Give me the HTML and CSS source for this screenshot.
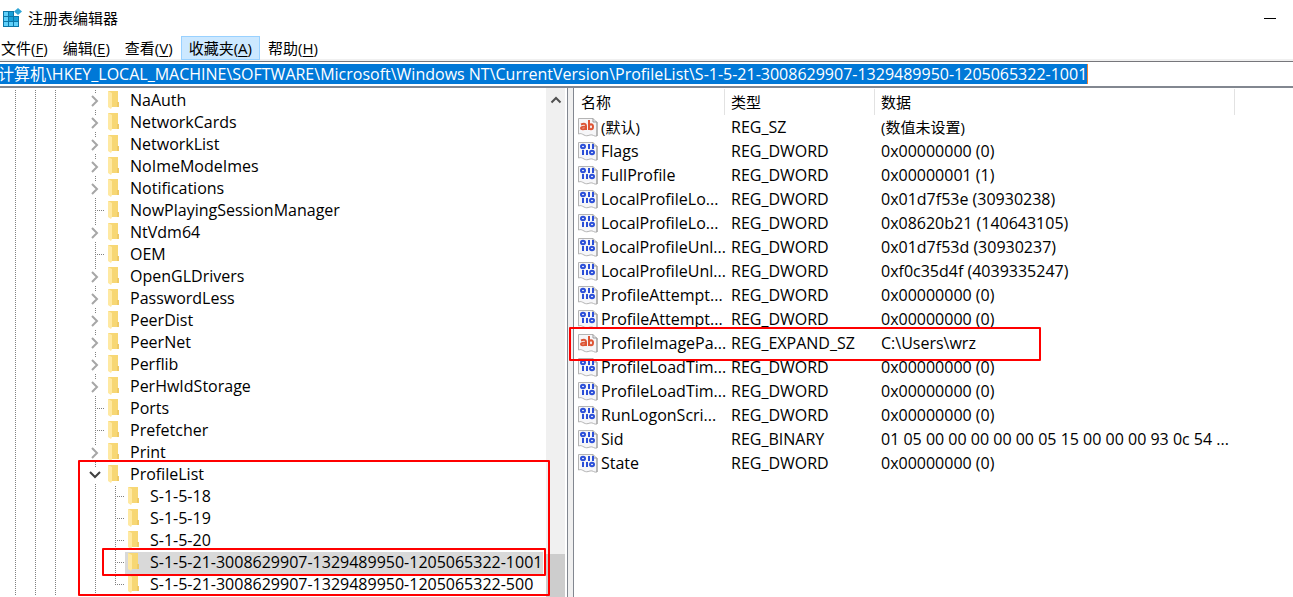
FILE: index.html
```html
<!DOCTYPE html>
<html lang="zh-CN">
<head>
<meta charset="utf-8">
<title>注册表编辑器</title>
<link rel="stylesheet" href="styles.css">
</head>
<body>
<svg class="defs" aria-hidden="true">
  <symbol id="folder" viewBox="0 0 14 18"><path d="M1 0h10v11h1v5H4z" fill="#f7d774"/><path d="M10 11h2v5h-2z" fill="#efca66"/><path d="M1 0l4 2v14l-1 2-3-2z" fill="#ffe9a2"/></symbol>
  <symbol id="closed" viewBox="0 0 12 12"><path d="M3 1l5 5-5 5" fill="none" stroke="#a6a6a6" stroke-width="2"/></symbol>
  <symbol id="opened" viewBox="0 0 12 12"><path d="M1 3l5 5 5-5" fill="none" stroke="#404040" stroke-width="2"/></symbol>
  <symbol id="page" viewBox="0 0 20 20"><path d="M.5 1.500H15l4 4V19c-3 1-4-2-7-1s-4 1-6 0-3-2-5.500-1z" fill="#f6f6f8" stroke="#b4b4b4"/><path d="M15 1.500V5h4v14" fill="none" stroke="#999"/></symbol>
  <symbol id="string" viewBox="0 0 20 20"><use href="#page"/><g fill="none" stroke="#dd5535" stroke-width="2"><path d="M3 7.500c3.500-1.500 5-.5 5 1.500v4M8 9.500c-3 0-5 .3-5 1.700s3 1.500 5 0"/><path d="M11 3v10"/><ellipse cx="13" cy="9.700" rx="2" ry="2.500"/></g></symbol>
  <symbol id="binary" viewBox="0 0 20 20"><use href="#page"/><g fill="none" stroke="#2b4fd8" stroke-width="2"><ellipse cx="5" cy="5.500" rx="2" ry="1.700"/><path d="M11 3v5M15 3v5M5 9v5M9 9v5"/><ellipse cx="14" cy="11.500" rx="2" ry="1.700"/></g></symbol>
</svg>
<div class="app">
  <header class="title">
    <svg class="logo" viewBox="0 0 20 20"><path d="M1 3h16v16H1z" fill="#0b76a8"/><path d="M2 4h4v4H2zM2 9h4v4H2zM2 14h4v4H2zM7 14h4v4H7zM12 14h4v4h-4z" fill="#5fd0fa"/><path d="M7 4h4v4H7zM7 9h4v4H7zM12 9h4v4h-4z" fill="#18a0d8"/><path d="M12 3h6v5h-6z" fill="#fff"/><path d="M16 0l4 3.500-4 3.500-4-3.500z" fill="#2fa5d5"/></svg>
    <h1>注册表编辑器</h1>
    <button class="minimize" aria-label="最小化"></button>
  </header>
  <nav class="menu">
    <button>文件(<u>F</u>)</button><button>编辑(<u>E</u>)</button><button>查看(<u>V</u>)</button><button class="active">收藏夹(<u>A</u>)</button><button>帮助(<u>H</u>)</button>
  </nav>
  <div class="address"><input aria-label="地址" value="计算机\HKEY_LOCAL_MACHINE\SOFTWARE\Microsoft\Windows NT\CurrentVersion\ProfileList\S-1-5-21-3008629907-1329489950-1205065322-1001"></div>
  <main class="panes">
    <section class="keys">
      <ul class="tree" id="tree"></ul>
      <div class="scroll"><svg viewBox="0 0 12 12"><path d="M1.500 8.500L6 4l4.500 4.500" fill="none" stroke="#505050" stroke-width="2"/></svg><div class="thumb"></div></div>
    </section>
    <div class="splitter"></div>
    <section class="values">
      <table>
        <colgroup><col class="c-name"><col class="c-type"><col class="c-data"><col></colgroup>
        <thead><tr><th>名称</th><th>类型</th><th>数据</th><th></th></tr></thead>
        <tbody id="values"></tbody>
      </table>
    </section>
  </main>
</div>
<script src="app.js"></script>
</body>
</html>
```
FILE: styles.css
```css
* { box-sizing: border-box; }
body { margin: 0; overflow: hidden; background: #fff; color: #000; font: 16px/22px "Open Sans", "Noto Sans CJK SC", sans-serif; }
button, input { font: inherit; color: inherit; border: 0; padding: 0; background: none; }
.defs { position: absolute; width: 0; height: 0; }
.app { display: flex; flex-direction: column; height: 100vh; }
.title, .menu, th, .cjk { font-size: 15px; }
.title { display: flex; align-items: center; height: 36px; padding: 0 17px 0 2px; }
.logo { width: 20px; height: 20px; }
h1 { flex: 1; margin: 0 0 0 6px; font: inherit; }
.minimize { width: 13px; height: 20px; background: linear-gradient(#000, #000) center / 12px 1px no-repeat; }
.menu { display: flex; height: 25px; gap: 1px; border-bottom: 2px solid #f0f0f0; margin-left: -6px; }
.menu button { height: 24px; padding: 0 6px; border: 1px solid transparent; white-space: nowrap; }
.menu .active { background: #cce8ff; border-color: #99d1ff; padding: 0 7px; }
u { text-underline-offset: 2px; }
.address { height: 27px; padding: 2px 0; border-top: 1px solid #76767b; border-bottom: 2px solid #828790; overflow: hidden; }
.address input { display: block; field-sizing: content; height: 20px; margin-left: -2px; background: #0078d7; color: #fff; border-right: 1px solid #f08030; }
.panes { display: flex; flex: 1; min-height: 0; }
.keys { display: flex; flex: 0 0 567px; min-width: 0; }
.tree { flex: 1; margin: 0; padding: 2px 0 0; list-style: none; }
.tree ul { margin: 0; padding: 0; list-style: none; }
.row { display: flex; height: 22px; padding-left: 5px; white-space: nowrap; position: relative; }
.guide { flex: 0 0 20px; display: flex; align-items: center; justify-content: center; }
.line { background: repeating-linear-gradient(#808080 0 1px, transparent 1px 2px) 10px 0 / 1px 100% no-repeat; }
.branch { background: repeating-linear-gradient(#808080 0 1px, transparent 1px 2px) 10px 0 / 1px 100% no-repeat, repeating-linear-gradient(90deg, #808080 0 1px, transparent 1px 2px) 10px 10px / 10px 1px no-repeat; }
.branch.last { background-size: 1px 50%, 10px 1px; }
.guide svg { width: 12px; height: 16px; background: #fff; }
.key { display: flex; align-items: center; padding: 0 1px 2px 0; }
.key svg { width: 14px; height: 18px; margin: 0 9px 0 2px; }
.selected .key { background: #d9d9d9; }
.group { position: relative; }
.mark { position: absolute; border: 2px solid #f00; border-radius: 1px; pointer-events: none; }
.mark.profile { left: 78px; top: -4px; bottom: 0; width: 472px; z-index: 1; }
.mark.sid { left: 102px; top: -4px; height: 28px; width: 444px; z-index: 1; }
.mark.path { left: -5px; top: -4px; height: 34px; width: 472px; }
.scroll { display: flex; flex-direction: column; justify-content: space-between; align-items: center; width: 19px; margin-right: 2px; background: #f0f0f0; }
.scroll svg { width: 12px; margin-top: 6px; }
.thumb { width: 100%; height: 43px; background: #cdcdcd; }
.splitter { flex: 0 0 7px; background: #f0f0f0; border: solid #828790; border-width: 0 1px; }
.values { flex: 1; min-width: 0; }
table { width: 100%; table-layout: fixed; border-collapse: collapse; }
.c-name, .c-type { width: 150px; }
.c-data { width: 360px; }
th, td { padding: 0 0 0 7px; height: 24px; text-align: left; font-weight: normal; white-space: nowrap; }
th { height: 27px; }
th + th { background: linear-gradient(#e2e2e2, #e2e2e2) left 1px / 1px 26px no-repeat; }
tbody td:first-child { padding-left: 4px; }
.name { display: flex; align-items: center; gap: 3px; }
.name svg { flex: 0 0 20px; height: 20px; }
.marked { position: relative; }
```
FILE: app.js
```js
const icon = id => `<svg aria-hidden="true"><use href="#${id}"/></svg>`;
const guide = (cls, content = '') => `<span class="guide ${cls}">${content}</span>`;
const base = guide('line').repeat(3) + guide('');
const key = name => `<span class="key">${icon('folder')}${name}</span>`;

const leaves = ['NowPlayingSessionManager', 'OEM', 'Ports', 'Prefetcher'];
const keys = ['NaAuth', 'NetworkCards', 'NetworkList', 'NoImeModeImes', 'Notifications', 'NowPlayingSessionManager', 'NtVdm64', 'OEM', 'OpenGLDrivers', 'PasswordLess', 'PeerDist', 'PeerNet', 'Perflib', 'PerHwIdStorage', 'Ports', 'Prefetcher', 'Print'];
const sids = ['S-1-5-18', 'S-1-5-19', 'S-1-5-20', 'S-1-5-21-3008629907-1329489950-1205065322-1001', 'S-1-5-21-3008629907-1329489950-1205065322-500'];

document.getElementById('tree').innerHTML = keys.map(k =>
  `<li class="row">${base}${leaves.includes(k) ? guide('branch') : guide('line', icon('closed'))}${key(k)}</li>`).join('') +
  `<li class="group"><div class="row">${base}${guide('line', icon('opened'))}${key('ProfileList')}</div><ul>` +
  sids.map((s, i) => `<li class="row${i === 3 ? ' selected' : ''}">${base}${guide('line')}${guide(i === 4 ? 'branch last' : 'branch')}${key(s)}${i === 3 ? '<span class="mark sid"></span>' : ''}</li>`).join('') +
  '</ul><span class="mark profile"></span></li>';

const zero = '0x00000000 (0)';
const values = [
  ['(默认)', 'REG_SZ', '(数值未设置)'],
  ['Flags', 'REG_DWORD', zero],
  ['FullProfile', 'REG_DWORD', '0x00000001 (1)'],
  ['LocalProfileLo...', 'REG_DWORD', '0x01d7f53e (30930238)'],
  ['LocalProfileLo...', 'REG_DWORD', '0x08620b21 (140643105)'],
  ['LocalProfileUnl...', 'REG_DWORD', '0x01d7f53d (30930237)'],
  ['LocalProfileUnl...', 'REG_DWORD', '0xf0c35d4f (4039335247)'],
  ['ProfileAttempt...', 'REG_DWORD', zero],
  ['ProfileAttempt...', 'REG_DWORD', zero],
  ['ProfileImagePa...', 'REG_EXPAND_SZ', 'C:\\Users\\wrz'],
  ['ProfileLoadTim...', 'REG_DWORD', zero],
  ['ProfileLoadTim...', 'REG_DWORD', zero],
  ['RunLogonScri...', 'REG_DWORD', zero],
  ['Sid', 'REG_BINARY', '01 05 00 00 00 00 00 05 15 00 00 00 93 0c 54 ...'],
  ['State', 'REG_DWORD', zero]
];
const text = s => /[\u4e00-\u9fff]/.test(s) ? `<span class="cjk">${s}</span>` : s;
document.getElementById('values').innerHTML = values.map(([n, t, d]) =>
  `<tr${n.startsWith('ProfileImage') ? ' class="marked"' : ''}><td><div class="name">${icon(t.endsWith('SZ') ? 'string' : 'binary')}${text(n)}</div></td><td>${t}</td><td>${text(d)}</td><td>${n.startsWith('ProfileImage') ? '<span class="mark path"></span>' : ''}</td></tr>`).join('');
```
